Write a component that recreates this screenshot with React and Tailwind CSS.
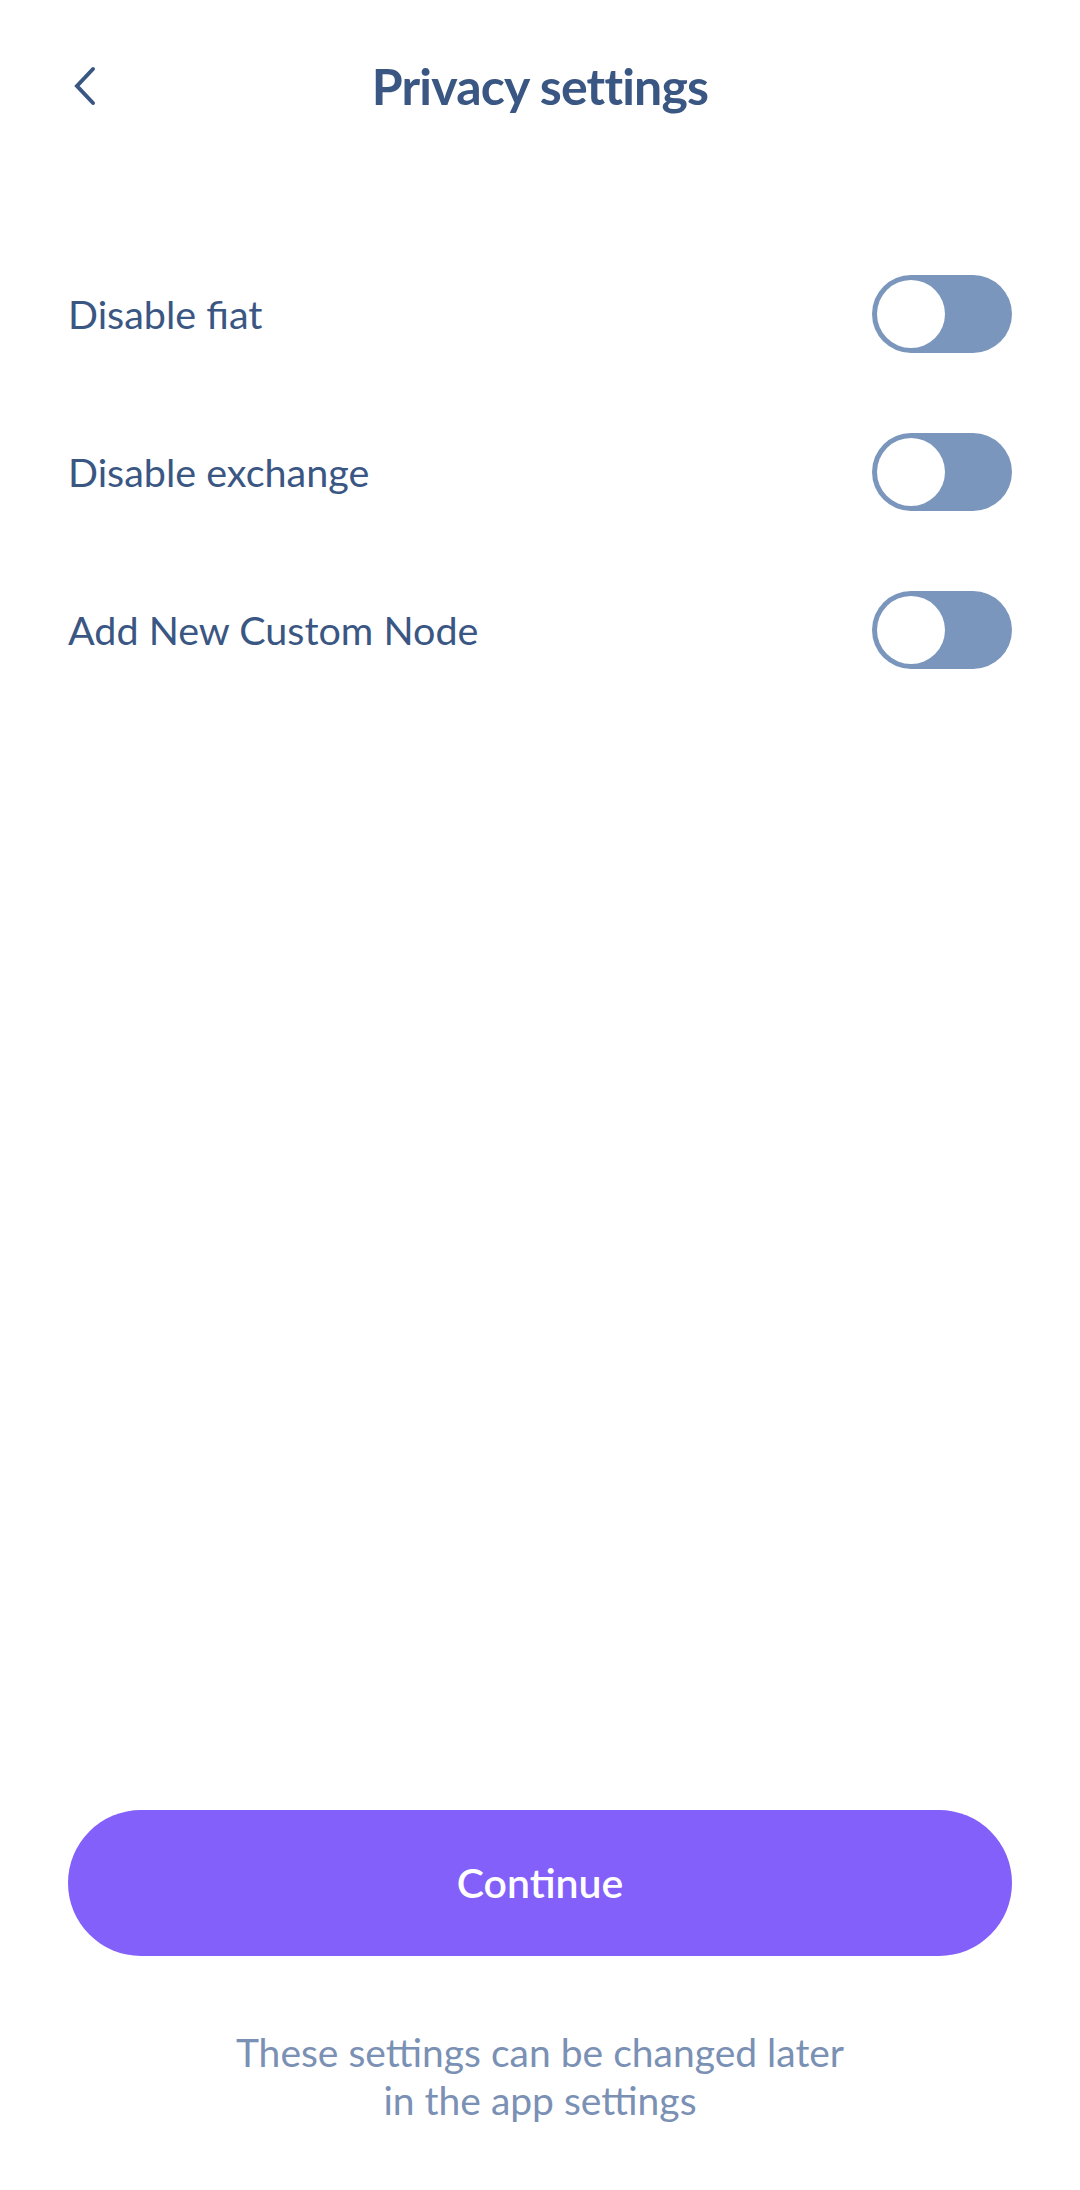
import React from "react";

function Toggle() {
  return (
    <div className="w-[140px] h-[78px] rounded-full bg-[#7b96bd] p-[5px] flex items-center">
      <div className="w-[68px] h-[68px] rounded-full bg-white" />
    </div>
  );
}

function Row({ label }) {
  return (
    <div className="flex items-center justify-between h-[78px]">
      <span className="text-[39.5px] text-[#3a5683] leading-none">{label}</span>
      <Toggle />
    </div>
  );
}

export default function App() {
  return (
    <div
      className="w-[1080px] h-[2190px] bg-white flex flex-col px-[68px]"
      style={{ fontFamily: "Lato, 'Noto Sans', sans-serif" }}
    >
      <div className="grid grid-cols-[1fr_auto_1fr] items-center h-[172px]">
        <div className="flex items-center pl-[3px]">
          <svg width="26" height="40" viewBox="0 0 26 40" fill="none">
            <polyline
              points="22,3 6,20 22,37"
              stroke="#3a5683"
              strokeWidth="4"
              strokeLinecap="round"
              strokeLinejoin="miter"
            />
          </svg>
        </div>
        <h1 className="text-[50px] font-bold text-[#3a5683] leading-none tracking-[-0.8px]">
          Privacy settings
        </h1>
        <div />
      </div>

      <div className="flex flex-col gap-[80px] mt-[103px]">
        <Row label="Disable fiat" />
        <Row label="Disable exchange" />
        <Row label="Add New Custom Node" />
      </div>

      <div className="flex-1" />

      <button className="h-[146px] w-full rounded-full bg-[#8360f9] text-white text-[41px] font-semibold">
        Continue
      </button>

      <p className="mt-[72px] mb-[66px] text-center text-[39px] leading-[48px] text-[#7a90b4]">
        These settings can be changed later
        <br />
        in the app settings
      </p>
    </div>
  );
}
